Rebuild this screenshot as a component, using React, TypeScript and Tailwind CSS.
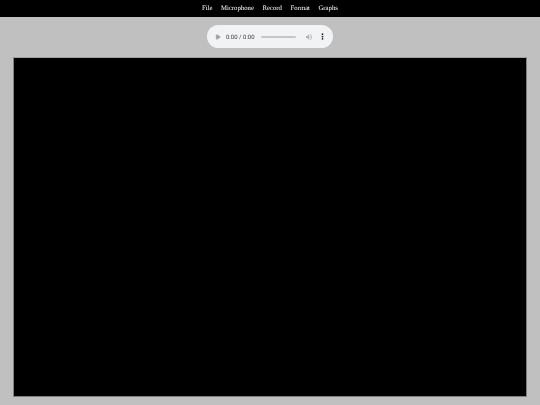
import { Play } from 'lucide-react';

const menus = ['File', 'Microphone', 'Record', 'Format', 'Graphs'];

export default function App() {
  return (
    <div className="h-[405px] w-[540px] overflow-hidden bg-[#c0c0c0] font-['Liberation_Serif',serif] antialiased">
      <nav className="flex h-[17px] items-center justify-center gap-[8.5px] bg-black pt-[2px] text-[6.75px] text-white [text-rendering:geometricPrecision] [will-change:transform]">
        {menus.map((m) => (
          <span key={m}>{m}</span>
        ))}
      </nav>

      <div className="flex justify-center pt-[8px]">
        <div className="flex h-[23px] w-[126px] items-center rounded-full bg-[#f1f3f4] pl-[8px] pr-[9px] font-['Roboto',sans-serif] text-[6px] text-[#3c4043] [text-rendering:geometricPrecision] [will-change:transform]">
          <Play size={6} className="fill-[#9aa0a6] text-[#9aa0a6]" />
          <span className="ml-[5px] w-[29px] whitespace-nowrap pt-[1px]">0:00 / 0:00</span>
          <div className="ml-[6px] h-[2px] w-[35px] rounded-full bg-[#c4c7c9]" />
          <svg viewBox="0 0 24 24" className="ml-[9px] h-[8px] w-[8px] fill-[#aeb2b6]">
            <path d="M3 9v6h4l5 5V4L7 9H3zm13.5 3A4.5 4.5 0 0 0 14 8v8a4.5 4.5 0 0 0 2.5-4zM14 3.2v2.1a7 7 0 0 1 0 13.4v2.1a9 9 0 0 0 0-17.6z" />
          </svg>
          <svg viewBox="0 0 4 12" className="ml-[8px] h-[7px] w-[3px] fill-[#202124]">
            <circle cx="2" cy="2" r="1.5" />
            <circle cx="2" cy="6" r="1.5" />
            <circle cx="2" cy="10" r="1.5" />
          </svg>
        </div>
      </div>

      <div className="mx-[13px] mt-[9px] h-[340px] w-[514px] border border-[#808080] border-t-[#a0a0a0] bg-black" />
    </div>
  );
}
